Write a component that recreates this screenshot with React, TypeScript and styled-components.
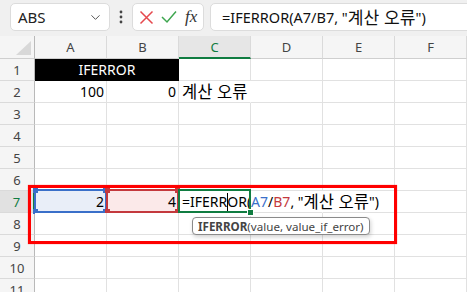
import styled, { createGlobalStyle } from 'styled-components';
import { ChevronDown } from 'lucide-react';

const GlobalStyle = createGlobalStyle`
  body {
    margin: 0;
    background: #fff;
    font-family: 'Noto Sans', 'Noto Sans CJK KR', sans-serif;
  }
`;

const GREEN = '#107c41';
const GRID = '#e1e1e1';

const Window = styled.div`
  position: relative;
  width: 467px;
  height: 292px;
  overflow: hidden;
  background: #fff;
`;

const FormulaBar = styled.div`
  display: flex;
  align-items: center;
  height: 36px;
  box-sizing: border-box;
  padding: 3px 0 5px 10px;
  background: #f0f0f0;
`;

const Box = styled.div`
  display: flex;
  align-items: center;
  height: 28px;
  box-sizing: border-box;
  background: #fff;
  border: 1px solid #dcdcdc;
  border-radius: 5px;
`;

const NameBox = styled(Box)`
  width: 100px;
  justify-content: space-between;
  padding: 0 6px 0 7px;
  font-size: 15px;
  color: #222;
`;

const Dots = styled.div`
  display: flex;
  justify-content: center;
  width: 22px;
`;

const ButtonGroup = styled(Box)`
  width: 72px;
  justify-content: space-around;
  padding: 0 2px;
`;

const Fx = styled.span`
  font-family: 'Liberation Serif', serif;
  font-style: italic;
  font-size: 17px;
  color: #333;
`;

const FormulaInput = styled(Box)`
  flex: 1;
  margin-left: 6px;
  margin-right: -10px;
  padding-left: 11px;
  font-size: 14.5px;
  color: #111;
  white-space: nowrap;
`;

const Ko = styled.span`
  font-family: 'Noto Sans CJK KR', sans-serif;
  font-size: 1.18em;
  line-height: 1;
  word-spacing: 1px;
`;

const Sheet = styled.div`
  display: grid;
  grid-template-columns: 35px repeat(6, 72px);
  grid-template-rows: 23px repeat(11, 22px);
`;

const Corner = styled.div`
  display: flex;
  align-items: flex-end;
  justify-content: flex-end;
  padding: 0 3px 3px 0;
  background: #f5f5f5;
  border-right: 1px solid #b9b9b9;
  border-bottom: 1px solid #cfcfcf;
`;

const ColHeader = styled.div<{ $active?: boolean }>`
  display: flex;
  align-items: center;
  justify-content: center;
  font-size: 13px;
  color: ${(p) => (p.$active ? GREEN : '#444')};
  background: ${(p) => (p.$active ? '#e6e6e6' : '#f5f5f5')};
  border-right: 1px solid #dadada;
  border-bottom: ${(p) => (p.$active ? `2px solid ${GREEN}` : '1px solid #cfcfcf')};
`;

const RowHeader = styled.div<{ $active?: boolean }>`
  display: flex;
  align-items: center;
  justify-content: center;
  font-size: 13px;
  color: ${(p) => (p.$active ? GREEN : '#444')};
  background: ${(p) => (p.$active ? '#e1e1e1' : '#f5f5f5')};
  border-right: ${(p) => (p.$active ? `2px solid ${GREEN}` : '1px solid #b9b9b9')};
  border-bottom: 1px solid #dadada;
`;

const Cell = styled.div<{
  $align?: 'left' | 'right' | 'center';
  $span?: number;
  $dark?: boolean;
  $bg?: string;
  $hideRight?: boolean;
  $top?: boolean;
}>`
  position: relative;
  ${(p) => (p.$top ? 'z-index: 1;' : '')}
  grid-column: span ${(p) => p.$span || 1};
  display: flex;
  align-items: center;
  justify-content: ${(p) =>
    p.$align === 'right' ? 'flex-end' : p.$align === 'center' ? 'center' : 'flex-start'};
  padding: 0 2px 0 3px;
  font-size: 14px;
  white-space: nowrap;
  color: ${(p) => (p.$dark ? '#fff' : '#000')};
  background: ${(p) => (p.$dark ? '#000' : p.$bg || '#fff')};
  border-right: 1px solid ${(p) => (p.$dark ? '#000' : p.$hideRight ? 'transparent' : GRID)};
  border-bottom: 1px solid ${(p) => (p.$dark ? '#000' : GRID)};
`;

const Ring = styled.div<{ $color: string }>`
  position: absolute;
  inset: -2px -1px -1px -1px;
  border: 2px solid ${(p) => p.$color};
  pointer-events: none;
`;

const Handle = styled.span<{ $color: string; $x: 'left' | 'right'; $y: 'top' | 'bottom' }>`
  position: absolute;
  width: 5px;
  height: 5px;
  background: ${(p) => p.$color};
  ${(p) => p.$x}: -3px;
  ${(p) => p.$y}: -3px;
`;

const FillHandle = styled.span`
  position: absolute;
  right: -4px;
  bottom: -4px;
  width: 5px;
  height: 5px;
  background: ${GREEN};
  border: 1px solid #fff;
`;

const Ref = styled.span<{ $color: string }>`
  color: ${(p) => p.$color};
`;

const Caret = styled.span`
  display: inline-block;
  width: 0;
  height: 18px;
  border-left: 1px solid #000;
  vertical-align: middle;
  margin: 0 -0.5px;
`;

const Tooltip = styled.div`
  position: absolute;
  left: 192px;
  top: 217px;
  height: 16px;
  padding: 0 5px;
  display: flex;
  align-items: center;
  font-size: 11.6px;
  color: #444;
  background: #fff;
  border: 1px solid #8a8a8a;
  border-radius: 4px;
  box-shadow: 1px 2px 4px rgba(0, 0, 0, 0.18);
  white-space: nowrap;
`;

const Strong = styled.b`
  font-weight: 700;
`;

const Annotation = styled.div`
  position: absolute;
  left: 28px;
  top: 185px;
  width: 369px;
  height: 59px;
  box-sizing: border-box;
  border: 3px solid #ff0000;
  box-shadow: 0 0 1px rgba(255, 0, 0, 0.6);
  pointer-events: none;
`;

const COLS = ['A', 'B', 'C', 'D', 'E', 'F'];

function Range({ color }: { color: string }) {
  return (
    <Ring $color={color}>
      <Handle $color={color} $x="left" $y="top" />
      <Handle $color={color} $x="right" $y="top" />
      <Handle $color={color} $x="left" $y="bottom" />
      <Handle $color={color} $x="right" $y="bottom" />
    </Ring>
  );
}

function EmptyRow({ n }: { n: number }) {
  return (
    <>
      <RowHeader>{n}</RowHeader>
      {COLS.map((c) => (
        <Cell key={c} />
      ))}
    </>
  );
}

export default function App() {
  const blue = '#3a6fc9';
  const red = '#c4393d';
  return (
    <Window>
      <GlobalStyle />
      <FormulaBar>
        <NameBox>
          ABS
          <ChevronDown size={15} color="#555" strokeWidth={1.6} />
        </NameBox>
        <Dots>
          <svg width="4" height="14" viewBox="0 0 4 14">
            <circle cx="2" cy="2" r="1.4" fill="#444" />
            <circle cx="2" cy="7" r="1.4" fill="#444" />
            <circle cx="2" cy="12" r="1.4" fill="#444" />
          </svg>
        </Dots>
        <ButtonGroup>
          <svg width="15" height="15" viewBox="0 0 15 15">
            <path d="M1.5 1.5 L13.5 13.5 M13.5 1.5 L1.5 13.5" stroke="#e5484d" strokeWidth="1.5" fill="none" />
          </svg>
          <svg width="16" height="14" viewBox="0 0 16 14">
            <path d="M1 7 L6 12 L15 1.5" stroke="#3ea64f" strokeWidth="1.5" fill="none" />
          </svg>
          <Fx>fx</Fx>
        </ButtonGroup>
        <FormulaInput>
          =IFERROR(A7/B7, "<Ko>계산 오류</Ko>")
        </FormulaInput>
      </FormulaBar>

      <Sheet>
        <Corner>
          <svg width="15" height="14" viewBox="0 0 15 14">
            <path d="M15 0 L15 14 L0 14 Z" fill="#d8d8d8" />
          </svg>
        </Corner>
        {COLS.map((c) => (
          <ColHeader key={c} $active={c === 'C'}>
            {c}
          </ColHeader>
        ))}

        <RowHeader>1</RowHeader>
        <Cell $span={2} $dark $align="center">
          IFERROR
        </Cell>
        <Cell />
        <Cell />
        <Cell />
        <Cell />

        <RowHeader>2</RowHeader>
        <Cell $align="right">100</Cell>
        <Cell $align="right">0</Cell>
        <Cell $hideRight $top>
          <Ko>계산 오류</Ko>
        </Cell>
        <Cell />
        <Cell />
        <Cell />

        <EmptyRow n={3} />
        <EmptyRow n={4} />
        <EmptyRow n={5} />
        <EmptyRow n={6} />

        <RowHeader $active>7</RowHeader>
        <Cell $align="right" $bg="#e9eef8">
          2
          <Range color={blue} />
        </Cell>
        <Cell $align="right" $bg="#fbe9e9">
          4
          <Range color={red} />
        </Cell>
        <Cell $hideRight $top>
          =IFERR
          <Caret />
          OR(<Ref $color={blue}>A7</Ref>/<Ref $color={red}>B7</Ref>, "<Ko>계산 오류</Ko>")
          <Ring $color={GREEN} />
          <FillHandle />
        </Cell>
        <Cell $hideRight />
        <Cell />
        <Cell />

        <EmptyRow n={8} />
        <EmptyRow n={9} />
        <EmptyRow n={10} />
        <EmptyRow n={11} />
      </Sheet>

      <Tooltip>
        <Strong>IFERROR</Strong>(value, value_if_error)
      </Tooltip>
      <Annotation />
    </Window>
  );
}
